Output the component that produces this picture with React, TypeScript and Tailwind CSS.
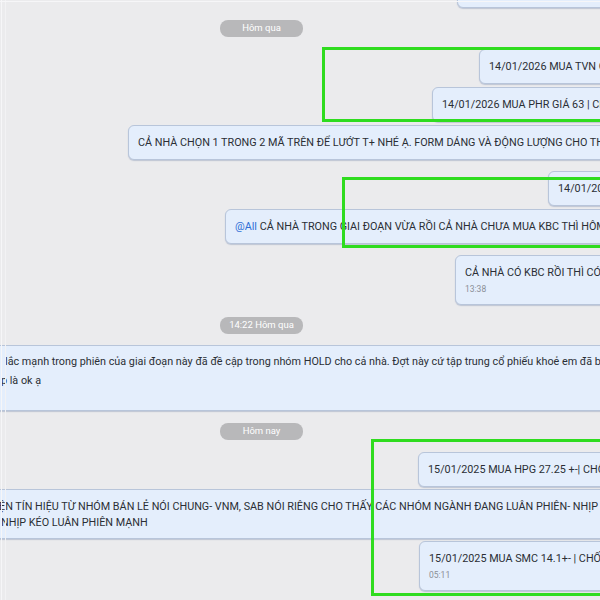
import React from "react";

const bubble =
  "shrink-0 rounded-[6px] border border-[#b8c5da] bg-[#e4eefc] shadow-[0_1px_1px_rgba(110,130,165,0.35)] text-[#2b2e35] whitespace-nowrap";

function Pill({ text }: { text: string }) {
  return (
    <div className="flex pl-[220px]">
      <div className="flex h-[17px] w-[83px] items-center justify-center rounded-[8px] bg-[#b8b8ba] text-[9.5px] text-white">
        {text}
      </div>
    </div>
  );
}

function Line({ pad, text, time }: { pad: string; text: React.ReactNode; time?: string }) {
  return (
    <div className={"flex " + pad}>
      <div
        className={
          bubble +
          (time
            ? " flex h-[50px] w-[400px] flex-col justify-start pl-[9px] pt-[9px]"
            : " flex h-[35px] w-[600px] items-center pl-[9px]")
        }
      >
        <div className="leading-[16px]">{text}</div>
        {time && <div className="mt-[2px] text-[8.5px] text-[#8b8f97]">{time}</div>}
      </div>
    </div>
  );
}

export default function App() {
  return (
    <div className="relative h-[600px] w-[600px] overflow-hidden bg-[#ebebed] font-['Roboto',sans-serif] text-[10.8px]">
      {/* frame edges */}
      <div className="absolute left-[1px] top-0 h-full w-[1px] bg-[#f6f6f8]" />
      <div className="absolute left-[5px] top-0 h-full w-[1px] bg-[#f2f2f4]" />
      <div className="absolute left-0 top-[1px] h-[1px] w-full bg-[#f6f6f8]" />

      <div className="flex flex-col">
        <div className="-mt-[26px] flex pl-[457px]">
          <div className={bubble + " h-[34px] w-[300px]"} />
        </div>

        <div className="mt-[12px]">
          <Pill text="Hôm qua" />
        </div>

        <div className="mt-[12px] flex flex-col gap-[3px]">
          <Line pad="pl-[479px]" text="14/01/2026 MUA TVN GIÁ 13.2 | CHỐT LỜI" />
          <Line pad="pl-[432px]" text="14/01/2026 MUA PHR GIÁ 63 | CHỐT LỜI 68" />
          <Line
            pad="pl-[128px]"
            text="CẢ NHÀ CHỌN 1 TRONG 2 MÃ TRÊN ĐỂ LƯỚT T+ NHÉ Ạ. FORM DÁNG VÀ ĐỘNG LƯỢNG CHO THẤY"
          />
        </div>

        <div className="mt-[11px] flex flex-col gap-[3px]">
          <Line pad="pl-[548px]" text="14/01/2026 MUA KBC" />
          <Line
            pad="pl-[225px]"
            text={
              <>
                <span className="text-[#2f6fd6]">@All</span> CẢ NHÀ TRONG GIAI ĐOẠN VỪA RỒI CẢ NHÀ CHƯA MUA KBC THÌ HÔM NAY
              </>
            }
          />
        </div>

        <div className="mt-[11px]">
          <Line pad="pl-[455px]" text="CẢ NHÀ CÓ KBC RỒI THÌ CÓ THỂ GIỮ" time="13:38" />
        </div>

        <div className="mt-[12px]">
          <Pill text="14:22 Hôm qua" />
        </div>

        <div className="mt-[11px] flex -ml-[10px]">
          <div className={bubble + " h-[66px] w-[700px] pt-[6px] pl-[10px] leading-[19px]"}>
            <div className="pl-[4px]">
              lắc mạnh trong phiên của giai đoạn này đã đề cập trong nhóm HOLD cho cả nhà. Đợt này cứ tập trung cổ phiếu khoẻ em đã báo
            </div>
            <div>p là ok ạ</div>
          </div>
        </div>

        <div className="mt-[12px]">
          <Pill text="Hôm nay" />
        </div>

        <div className="mt-[12px]">
          <Line pad="pl-[418px]" text="15/01/2025 MUA HPG 27.25 +-| CHỐT LỜI" />
        </div>

        <div className="mt-[2px] flex -ml-[12px]">
          <div className={bubble + " h-[50px] w-[700px] pt-[9px] pl-[10px] leading-[16px]"}>
            <div>ỆN TÍN HIỆU TỪ NHÓM BÁN LẺ NÓI CHUNG- VNM, SAB NÓI RIÊNG CHO THẤY CÁC NHÓM NGÀNH ĐANG LUÂN PHIÊN- NHỊP</div>
            <div className="pl-[2px]">NHỊP KÉO LUÂN PHIÊN MẠNH</div>
          </div>
        </div>

        <div className="mt-[2px]">
          <Line pad="pl-[419px]" text="15/01/2025 MUA SMC 14.1+- | CHỐT LỜI" time="05:11" />
        </div>

        <div className="mt-[9px]">
          <Pill text="Hôm nay" />
        </div>
      </div>

      {/* highlight boxes drawn over the chat */}
      <div className="absolute left-[322px] top-[47px] h-[75px] w-[320px] border-[3px] border-[#2fdc1f]" />
      <div className="absolute left-[342px] top-[177px] h-[71px] w-[300px] border-[3px] border-[#2fdc1f]" />
      <div className="absolute left-[371px] top-[439px] h-[157px] w-[270px] border-[3px] border-[#2fdc1f]" />
    </div>
  );
}
